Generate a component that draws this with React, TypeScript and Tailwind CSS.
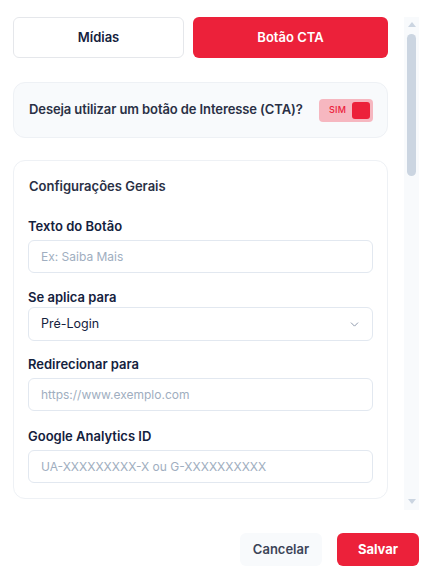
import { ChevronDown } from 'lucide-react';

const font = { fontFamily: 'Inter, "Noto Sans", sans-serif' };

function Field({ label, placeholder }: { label: string; placeholder: string }) {
  return (
    <div className="flex flex-col">
      <label className="text-[13px] leading-5 font-semibold text-[#14213d]">{label}</label>
      <div className="mt-1 h-[33px] w-full rounded-md border border-[#e2e8f0] bg-white px-3 flex items-center">
        <span className="text-[12px] text-[#a0aec0]">{placeholder}</span>
      </div>
    </div>
  );
}

function FakeScrollbar() {
  return (
    <div className="w-[15px] h-[493px] bg-[#f8fafc] flex flex-col items-center shrink-0">
      <div className="mt-[5px] w-0 h-0 border-l-[4px] border-r-[4px] border-b-[5px] border-l-transparent border-r-transparent border-b-[#cbd5e1]" />
      <div className="mt-[7px] w-[9px] h-[142px] rounded-full bg-[#cbd5e1]" />
      <div className="flex-1" />
      <div className="mb-[6px] w-0 h-0 border-l-[4px] border-r-[4px] border-t-[5px] border-l-transparent border-r-transparent border-t-[#cbd5e1]" />
    </div>
  );
}

export default function App() {
  return (
    <div className="w-[429px] h-[571px] bg-white pt-[17px] pl-[13px] pr-[10px] flex flex-col" style={font}>
      <div className="flex h-[493px]">
        {/* Scrollable content */}
        <div className="flex-1 h-[493px] overflow-hidden pr-4">
          {/* Tabs */}
          <div className="flex gap-[9px]">
            <button className="w-[171px] h-[41px] rounded-md border border-[#e5e7eb] bg-white text-[13px] font-semibold text-[#14213d]">
              Mídias
            </button>
            <button className="flex-1 h-[41px] rounded-md bg-[#ec213a] text-[13px] font-semibold text-white">
              Botão CTA
            </button>
          </div>

          {/* CTA question */}
          <div className="mt-[24px] h-[56px] rounded-xl border border-[#eef1f5] bg-[#f8fafc] pl-[15px] pr-[14px] flex items-center justify-between">
            <span className="text-[13px] font-semibold text-[#2a3045] tracking-[-0.1px]">Deseja utilizar um botão de Interesse (CTA)?</span>
            <div className="w-[54px] h-[23px] rounded-[4px] bg-[#f6b7c0] flex items-center justify-between pl-[10px] pr-[3px]">
              <span className="text-[9px] font-medium text-[#ec213a] tracking-wide">SIM</span>
              <div className="w-[18px] h-[17px] rounded-[3px] bg-[#ec213a]" />
            </div>
          </div>

          {/* Config card */}
          <div className="mt-[22px] rounded-xl border border-[#eef1f5] bg-white px-[14px] pt-[15px] pb-[15px]">
            <h3 className="text-[13px] leading-5 font-semibold text-[#2a3045] pl-[1px]">Configurações Gerais</h3>
            <div className="mt-5 flex flex-col gap-[15px]">
              <Field label="Texto do Botão" placeholder="Ex: Saiba Mais" />
              <div className="flex flex-col -mt-[1px]">
                <label className="text-[13px] leading-5 font-semibold text-[#14213d]">Se aplica para</label>
                <div className="h-[34px] w-full rounded-md border border-[#e2e8f0] bg-white pl-3 pr-[11px] flex items-center justify-between">
                  <span className="text-[12.5px] text-[#14213d]">Pré-Login</span>
                  <ChevronDown size={13} strokeWidth={1.75} className="text-[#8a94a8]" />
                </div>
              </div>
              <div className="-mt-[2px]">
                <Field label="Redirecionar para" placeholder="https://www.exemplo.com" />
              </div>
              <Field label="Google Analytics ID" placeholder="UA-XXXXXXXXX-X ou G-XXXXXXXXXX" />
            </div>
          </div>

          {/* Next section (cut off) */}
          <div className="mt-[11px] border-t border-[#eef1f5] h-10" />
        </div>

        <FakeScrollbar />
      </div>

      {/* Footer */}
      <div className="pt-[23px] flex justify-end gap-[15px]">
        <button className="w-[82px] h-[33px] rounded-md bg-[#f8fafc] text-[13px] font-semibold text-[#3c4457]">
          Cancelar
        </button>
        <button className="w-[82px] h-[33px] rounded-md bg-[#ec213a] text-[13px] font-bold text-white">
          Salvar
        </button>
      </div>
    </div>
  );
}
